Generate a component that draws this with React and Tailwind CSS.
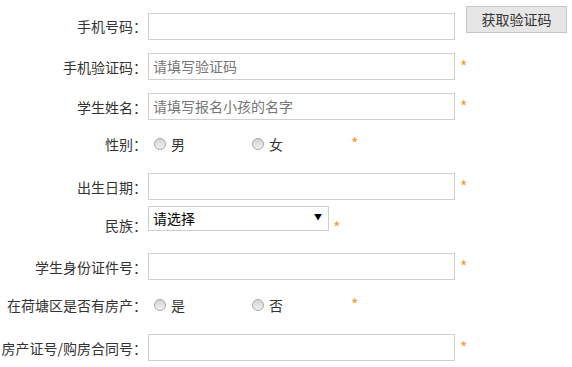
import React from "react";

const font = { fontFamily: '"Noto Sans CJK SC", "Noto Sans", sans-serif' };

function Star({ className = "" }) {
  return (
    <span className={"text-[16px] leading-none text-[#f29b38] " + className}>*</span>
  );
}

function Label({ children, className = "" }) {
  return (
    <div className={"w-[148px] shrink-0 pr-[1px] text-right text-[14px] leading-[20px] text-[#333] " + className}>
      {children}
    </div>
  );
}

function TextInput({ placeholder }) {
  return (
    <div className="flex h-[27px] w-[307px] shrink-0 items-center border border-[#cfcfcf] bg-white pl-[4px] text-[14px] text-[#757575]">
      {placeholder || ""}
    </div>
  );
}

function Radio() {
  return (
    <span className="inline-block h-[12px] w-[12px] rounded-full border border-[#a8a8a8] bg-gradient-to-b from-[#d4d4d4] to-[#f2f2f2]" />
  );
}

function RadioPair({ a, b }) {
  return (
    <div className="flex items-center text-[14px] text-[#333]">
      <div className="flex w-[98px] items-center">
        <span className="ml-[6px]"><Radio /></span>
        <span className="ml-[5px]">{a}</span>
      </div>
      <div className="flex w-[105px] items-center">
        <span className="ml-[6px]"><Radio /></span>
        <span className="ml-[5px]">{b}</span>
      </div>
      <Star className="mt-[-2px]" />
    </div>
  );
}

export default function App() {
  return (
    <div className="relative h-[367px] w-[572px] overflow-hidden bg-white" style={font}>
      <div className="mt-[13px] flex items-start">
        <Label className="mt-[3px]">手机号码：</Label>
        <TextInput />
        <button className="ml-[11px] mt-[-7px] h-[27px] w-[101px] border border-[#c6c6c6] bg-[#e6e6e6] text-[14px] text-[#333]">
          获取验证码
        </button>
      </div>
      <div className="mt-[13px] flex items-center">
        <Label>手机验证码：</Label>
        <TextInput placeholder="请填写验证码" />
        <Star className="ml-[5px] mt-[-2px]" />
      </div>
      <div className="mt-[13px] flex items-center">
        <Label>学生姓名：</Label>
        <TextInput placeholder="请填写报名小孩的名字" />
        <Star className="ml-[5px] mt-[-2px]" />
      </div>
      <div className="mt-[7px] flex h-[34px] items-center">
        <Label>性别：</Label>
        <RadioPair a="男" b="女" />
      </div>
      <div className="mt-[12px] flex items-center">
        <Label>出生日期：</Label>
        <TextInput />
        <Star className="ml-[5px] mt-[-2px]" />
      </div>
      <div className="mt-[6px] flex h-[25px] items-start">
        <Label className="mt-[9px]">民族：</Label>
        <div className="flex h-[25px] w-[181px] items-center justify-between border border-[#cfcfcf] bg-white pl-[4px] pr-[6px] text-[14px] text-black">
          <span>请选择</span>
          <span className="mt-[-3px] text-[8px]">▼</span>
        </div>
        <Star className="ml-[4px] mt-[13px]" />
      </div>
      <div className="mt-[22px] flex items-center">
        <Label>学生身份证件号：</Label>
        <TextInput />
        <Star className="ml-[5px] mt-[-2px]" />
      </div>
      <div className="mt-[8px] flex h-[34px] items-center">
        <Label>在荷塘区是否有房产：</Label>
        <RadioPair a="是" b="否" />
      </div>
      <div className="mt-[12px] flex items-center">
        <Label>房产证号/购房合同号：</Label>
        <TextInput />
        <Star className="ml-[5px] mt-[-2px]" />
      </div>
    </div>
  );
}
